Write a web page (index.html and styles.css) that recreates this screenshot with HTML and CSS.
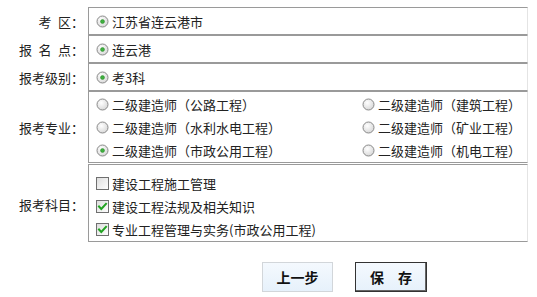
FILE: index.html
```html
<!DOCTYPE html>
<html lang="zh-CN">
<head>
<meta charset="utf-8">
<title>报考信息</title>
<link rel="stylesheet" href="styles.css">
</head>
<body>
<div class="form">
  <div class="row r1">
    <div class="label">考&ensp;区：</div>
    <div class="box single">
      <label class="opt"><svg class="radio" viewBox="0 0 13 13"><circle cx="6.5" cy="6.5" r="5.5" class="rc"/><circle cx="6.5" cy="6.5" r="2" class="dot"/></svg>江苏省连云港市</label>
    </div>
  </div>
  <div class="row r1">
    <div class="label">报&ensp;名&ensp;点：</div>
    <div class="box single">
      <label class="opt"><svg class="radio" viewBox="0 0 13 13"><circle cx="6.5" cy="6.5" r="5.5" class="rc"/><circle cx="6.5" cy="6.5" r="2" class="dot"/></svg>连云港</label>
    </div>
  </div>
  <div class="row r1">
    <div class="label">报考级别：</div>
    <div class="box single">
      <label class="opt"><svg class="radio" viewBox="0 0 13 13"><circle cx="6.5" cy="6.5" r="5.5" class="rc"/><circle cx="6.5" cy="6.5" r="2" class="dot"/></svg>考3科</label>
    </div>
  </div>
  <div class="row r4">
    <div class="label">报考专业：</div>
    <div class="box majors">
      <label class="opt"><svg class="radio" viewBox="0 0 13 13"><circle cx="6.5" cy="6.5" r="5.5" class="rc"/></svg>二级建造师（公路工程）</label>
      <label class="opt"><svg class="radio" viewBox="0 0 13 13"><circle cx="6.5" cy="6.5" r="5.5" class="rc"/></svg>二级建造师（建筑工程）</label>
      <label class="opt"><svg class="radio" viewBox="0 0 13 13"><circle cx="6.5" cy="6.5" r="5.5" class="rc"/></svg>二级建造师（水利水电工程）</label>
      <label class="opt"><svg class="radio" viewBox="0 0 13 13"><circle cx="6.5" cy="6.5" r="5.5" class="rc"/></svg>二级建造师（矿业工程）</label>
      <label class="opt"><svg class="radio" viewBox="0 0 13 13"><circle cx="6.5" cy="6.5" r="5.5" class="rc"/><circle cx="6.5" cy="6.5" r="2" class="dot"/></svg>二级建造师（市政公用工程）</label>
      <label class="opt"><svg class="radio" viewBox="0 0 13 13"><circle cx="6.5" cy="6.5" r="5.5" class="rc"/></svg>二级建造师（机电工程）</label>
    </div>
  </div>
  <div class="row r5">
    <div class="label">报考科目：</div>
    <div class="box subjects">
      <label class="opt"><svg class="check" viewBox="0 0 13 13"><rect x="0.5" y="0.5" width="12" height="12" class="cb"/></svg>建设工程施工管理</label>
      <label class="opt"><svg class="check" viewBox="0 0 13 13"><rect x="0.5" y="0.5" width="12" height="12" class="cb"/><path d="M3 6.5 L5.3 9 L10 3.8" class="tick"/></svg>建设工程法规及相关知识</label>
      <label class="opt"><svg class="check" viewBox="0 0 13 13"><rect x="0.5" y="0.5" width="12" height="12" class="cb"/><path d="M3 6.5 L5.3 9 L10 3.8" class="tick"/></svg>专业工程管理与实务(市政公用工程)</label>
    </div>
  </div>
</div>
<div class="buttons">
  <button class="btn prev">上一步</button>
  <button class="btn save">保&emsp;存</button>
</div>
<svg width="0" height="0" class="defs">
  <defs>
    <radialGradient id="rg" cx="0.4" cy="0.35" r="0.7">
      <stop offset="0" stop-color="#ffffff"/>
      <stop offset="1" stop-color="#d6d6d6"/>
    </radialGradient>
    <linearGradient id="cg" x1="0" y1="0" x2="1" y2="1">
      <stop offset="0" stop-color="#dcdcdc"/>
      <stop offset="1" stop-color="#ffffff"/>
    </linearGradient>
  </defs>
</svg>
</body>
</html>
```

FILE: styles.css
```css
html, body {
  margin: 0;
  padding: 0;
  background: #ffffff;
}
body {
  font-family: "Noto Sans CJK SC", "Noto Sans", sans-serif;
  font-size: 13px;
  color: #222;
}
.form {
  padding-top: 7px;
  width: 528px;
}
.row {
  display: grid;
  grid-template-columns: 84px 440px;
  column-gap: 4px;
}
.r1 { height: 28px; }
.r4 { height: 72px; }
.r5 { height: 78px; margin-top: 1px; }
.label {
  display: flex;
  align-items: center;
  justify-content: flex-end;
  white-space: nowrap;
  color: #222;
}
.r5 .label { padding-top: 2px; }
.box {
  box-sizing: border-box;
  border: 1px solid #9a9a9a;
  border-right-color: #e4e4e4;
  height: 100%;
}
.single {
  display: flex;
  align-items: center;
  padding-left: 7px;
}
.opt {
  display: flex;
  align-items: center;
  white-space: nowrap;
  height: 23px;
  line-height: 23px;
}
.majors {
  display: grid;
  grid-template-columns: 266px 1fr;
  grid-auto-rows: 23px;
  padding: 1px 0 0 7px;
}
.subjects {
  padding: 7px 0 0 7px;
}
.radio, .check {
  width: 13px;
  height: 13px;
  margin-right: 3px;
  flex: none;
}
.rc {
  fill: url(#rg);
  stroke: #8a8a8a;
  stroke-width: 1;
}
.dot {
  fill: #3fae3f;
  stroke: #2b8a2b;
  stroke-width: 0.5;
}
.cb {
  fill: url(#cg);
  stroke: #6f6f6f;
  stroke-width: 1;
}
.tick {
  fill: none;
  stroke: #21a321;
  stroke-width: 2;
  stroke-linecap: square;
}
.defs {
  position: absolute;
}
.buttons {
  display: flex;
  gap: 22px;
  padding-left: 262px;
  margin-top: 20px;
}
.btn {
  box-sizing: border-box;
  width: 71px;
  height: 30px;
  font-family: "Noto Sans CJK SC", sans-serif;
  font-size: 14px;
  font-weight: bold;
  color: #111;
  background: linear-gradient(#f4f9fe, #e6f1fb);
  padding: 0;
  cursor: pointer;
}
.prev {
  border: 1px solid #d2d6da;
}
.save {
  width: 72px;
  border: 1px solid #333;
  box-shadow: inset -1px -1px 0 #666;
}
```
